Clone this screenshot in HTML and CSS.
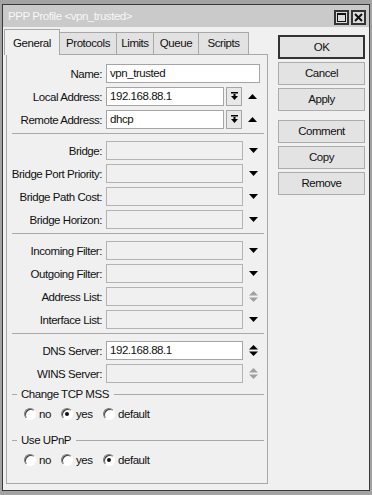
FILE: index.html
```html
<!DOCTYPE html>
<html>
<head>
  <link rel="stylesheet" href="styles.css">
</head>
<body>
<div class="window">
  <div class="titlebar">
    <span class="title">PPP Profile &lt;vpn_trusted&gt;</span>
    <span class="tb-buttons">
      <span class="tb-btn"><svg width="9" height="9" viewBox="0 0 9 9"><rect x="0.5" y="0.5" width="8" height="8" fill="none" stroke="#111"/><rect x="0" y="0" width="9" height="2" fill="#111"/></svg></span>
      <span class="tb-btn"><svg width="9" height="9" viewBox="0 0 9 9"><path d="M1 1 L8 8 M8 1 L1 8" stroke="#111" stroke-width="2"/></svg></span>
    </span>
  </div>
  <div class="content">
    <div class="left">
      <div class="tabs">
        <div class="tab active w-general">General</div>
        <div class="tab w-protocols">Protocols</div>
        <div class="tab w-limits">Limits</div>
        <div class="tab w-queue">Queue</div>
        <div class="tab w-scripts">Scripts</div>
      </div>
      <div class="panel">
        <div class="section first">
          <div class="row">
            <label>Name:</label>
            <div class="field name">vpn_trusted</div>
          </div>
          <div class="row">
            <label>Local Address:</label>
            <div class="field combo">192.168.88.1</div>
            <div class="combo-btn"><svg width="7" height="9" viewBox="0 0 7 9"><rect x="0" y="0" width="7" height="1.5"/><rect x="2.5" y="2" width="2" height="2.5"/><polygon points="0,4 7,4 3.5,8"/></svg></div>
            <div class="arrow"><svg width="9" height="5" viewBox="0 0 9 5"><polygon points="4.5,0 9,5 0,5"/></svg></div>
          </div>
          <div class="row">
            <label>Remote Address:</label>
            <div class="field combo">dhcp</div>
            <div class="combo-btn"><svg width="7" height="9" viewBox="0 0 7 9"><rect x="0" y="0" width="7" height="1.5"/><rect x="2.5" y="2" width="2" height="2.5"/><polygon points="0,4 7,4 3.5,8"/></svg></div>
            <div class="arrow"><svg width="9" height="5" viewBox="0 0 9 5"><polygon points="4.5,0 9,5 0,5"/></svg></div>
          </div>
        </div>

        <div class="section">
          <div class="row">
            <label>Bridge:</label>
            <div class="field empty"></div>
            <div class="arrow"><svg width="9" height="5" viewBox="0 0 9 5"><polygon points="0,0 9,0 4.5,5"/></svg></div>
          </div>
          <div class="row">
            <label>Bridge Port Priority:</label>
            <div class="field empty"></div>
            <div class="arrow"><svg width="9" height="5" viewBox="0 0 9 5"><polygon points="0,0 9,0 4.5,5"/></svg></div>
          </div>
          <div class="row">
            <label>Bridge Path Cost:</label>
            <div class="field empty"></div>
            <div class="arrow"><svg width="9" height="5" viewBox="0 0 9 5"><polygon points="0,0 9,0 4.5,5"/></svg></div>
          </div>
          <div class="row">
            <label>Bridge Horizon:</label>
            <div class="field empty"></div>
            <div class="arrow"><svg width="9" height="5" viewBox="0 0 9 5"><polygon points="0,0 9,0 4.5,5"/></svg></div>
          </div>
        </div>

        <div class="section">
          <div class="row">
            <label>Incoming Filter:</label>
            <div class="field empty"></div>
            <div class="arrow"><svg width="9" height="5" viewBox="0 0 9 5"><polygon points="0,0 9,0 4.5,5"/></svg></div>
          </div>
          <div class="row">
            <label>Outgoing Filter:</label>
            <div class="field empty"></div>
            <div class="arrow"><svg width="9" height="5" viewBox="0 0 9 5"><polygon points="0,0 9,0 4.5,5"/></svg></div>
          </div>
          <div class="row">
            <label>Address List:</label>
            <div class="field empty"></div>
            <div class="arrow grey"><svg width="9" height="11" viewBox="0 0 9 11"><polygon points="4.5,0 9,4.5 0,4.5"/><polygon points="0,6.5 9,6.5 4.5,11"/></svg></div>
          </div>
          <div class="row">
            <label>Interface List:</label>
            <div class="field empty"></div>
            <div class="arrow"><svg width="9" height="5" viewBox="0 0 9 5"><polygon points="0,0 9,0 4.5,5"/></svg></div>
          </div>
        </div>

        <div class="section">
          <div class="row">
            <label>DNS Server:</label>
            <div class="field">192.168.88.1</div>
            <div class="arrow"><svg width="9" height="11" viewBox="0 0 9 11"><polygon points="4.5,0 9,4.5 0,4.5"/><polygon points="0,6.5 9,6.5 4.5,11"/></svg></div>
          </div>
          <div class="row">
            <label>WINS Server:</label>
            <div class="field empty"></div>
            <div class="arrow grey"><svg width="9" height="11" viewBox="0 0 9 11"><polygon points="4.5,0 9,4.5 0,4.5"/><polygon points="0,6.5 9,6.5 4.5,11"/></svg></div>
          </div>

          <div class="group-head mss"><span class="line-short"></span><span>Change TCP MSS</span><span class="line-long"></span></div>
          <div class="radios">
            <span class="opt o1"><span class="radio"></span>no</span>
            <span class="opt o2"><span class="radio checked"></span>yes</span>
            <span class="opt"><span class="radio"></span>default</span>
          </div>

          <div class="group-head upnp"><span class="line-short"></span><span>Use UPnP</span><span class="line-long"></span></div>
          <div class="radios">
            <span class="opt o1"><span class="radio"></span>no</span>
            <span class="opt o2"><span class="radio"></span>yes</span>
            <span class="opt"><span class="radio checked"></span>default</span>
          </div>
        </div>
      </div>
    </div>

    <div class="buttons">
      <div class="btn default">OK</div>
      <div class="btn">Cancel</div>
      <div class="btn">Apply</div>
      <div class="btn gap">Comment</div>
      <div class="btn">Copy</div>
      <div class="btn">Remove</div>
    </div>
  </div>
</div>
</body>
</html>
```

FILE: styles.css
```css
body {
  margin: 0;
  background: #a3a3a3;
  font-family: "Liberation Sans", Arial, sans-serif;
  font-size: 11.5px;
  letter-spacing: -0.45px;
  color: #111;
}

.window {
  margin: 4px 2px 0 2px;
  border: 1px solid #3a3a3a;
  background: #f0f0f0;
}

.titlebar {
  height: 22px;
  background: #cacaca;
  color: #f7f7f7;
  display: flex;
  align-items: center;
  justify-content: space-between;
  padding-left: 5px;
  padding-right: 3px;
}
.title {
  font-size: 11.5px;
}
.tb-buttons {
  display: flex;
  gap: 2px;
  margin-top: 3px;
}
.tb-btn {
  width: 15px;
  height: 15px;
  box-sizing: border-box;
  border: 2px solid #333;
  background: #dcdcdc;
  display: flex;
  align-items: center;
  justify-content: center;
}

.content {
  display: flex;
  padding: 2px 4px 6px 3px;
}

/* tabs */
.tabs {
  display: flex;
  align-items: flex-end;
  height: 25px;
}
.tab {
  box-sizing: border-box;
  height: 22px;
  border: 1px solid #a8a8a8;
  border-bottom: none;
  background: #e2e2e2;
  margin-left: -1px;
  text-align: center;
  line-height: 21px;
}
.tab.active {
  height: 26px;
  margin-left: -2px;
  margin-bottom: -1px;
  background: #f0f0f0;
  position: relative;
  z-index: 1;
  line-height: 27px;
}
.w-general { width: 56px; }
.w-protocols { width: 58px; }
.w-limits { width: 38px; }
.w-queue { width: 46px; }
.w-scripts { width: 51px; }

.panel {
  width: 262px;
  box-sizing: border-box;
  border: 1px solid #a8a8a8;
  background: #f0f0f0;
  padding-bottom: 12px;
}

.section {
  display: flex;
  flex-direction: column;
  gap: 4px;
  margin: 0 3px 0 5px;
  padding: 7px 0 4px 0;
  border-top: 1px solid #a9a9a9;
}
.section.first {
  border-top: none;
  padding-top: 9px;
}

.row {
  display: flex;
  align-items: center;
  height: 19px;
  margin-left: -5px;
}
.row label {
  width: 95px;
  text-align: right;
  margin-right: 4px;
  white-space: nowrap;
}

.field {
  box-sizing: border-box;
  width: 137px;
  height: 19px;
  border: 1px solid #a5a5a5;
  background: #fff;
  padding-left: 3px;
  line-height: 17px;
  white-space: nowrap;
}
.field.name { width: 154px; }
.field.combo { width: 118px; }
.field.empty {
  background: #f0f0f0;
  border-color: #b3b3b3;
}

.combo-btn {
  box-sizing: border-box;
  width: 16px;
  height: 19px;
  margin-left: 2px;
  border: 1px solid #a5a5a5;
  background: #e8e8e8;
  display: flex;
  align-items: center;
  justify-content: center;
}

.arrow {
  width: 17px;
  margin-left: 2px;
  display: flex;
  justify-content: center;
  align-items: center;
  fill: #000;
}
.arrow.grey { fill: #a0a0a0; }

/* group headers */
.group-head {
  display: flex;
  align-items: center;
  height: 14px;
  margin-left: 0;
}
.group-head.mss { margin-top: 0; }
.group-head.upnp { margin-top: 8px; }
.line-short {
  width: 5px;
  border-top: 1px solid #a9a9a9;
  margin-right: 4px;
}
.line-long {
  flex: 1;
  border-top: 1px solid #a9a9a9;
  margin-left: 5px;
}

.radios {
  display: flex;
  align-items: center;
  height: 14px;
  padding-left: 12px;
  margin-top: 2px;
}
.opt {
  display: flex;
  align-items: center;
  gap: 3px;
}
.opt.o1 { width: 37px; }
.opt.o2 { width: 42px; }

.radio {
  box-sizing: border-box;
  width: 12px;
  height: 12px;
  border-radius: 50%;
  border: 1px solid;
  border-color: #7c7c7c #ffffff #ffffff #7c7c7c;
  box-shadow: inset 1px 1px 0 #404040;
  background: #fff;
  position: relative;
}
.radio.checked::after {
  content: "";
  position: absolute;
  left: 3px;
  top: 3px;
  width: 4px;
  height: 4px;
  border-radius: 50%;
  background: #111;
}

/* right buttons */
.buttons {
  display: flex;
  flex-direction: column;
  gap: 3px;
  margin-left: 10px;
  margin-top: 6px;
}
.btn {
  box-sizing: border-box;
  width: 87px;
  height: 23px;
  border: 1px solid #acacac;
  background: #e3e3e3;
  text-align: center;
  line-height: 21px;
}
.btn.default {
  height: 24px;
  border: 2px solid #333;
  line-height: 20px;
}
.btn.gap { margin-top: 6px; }
```
